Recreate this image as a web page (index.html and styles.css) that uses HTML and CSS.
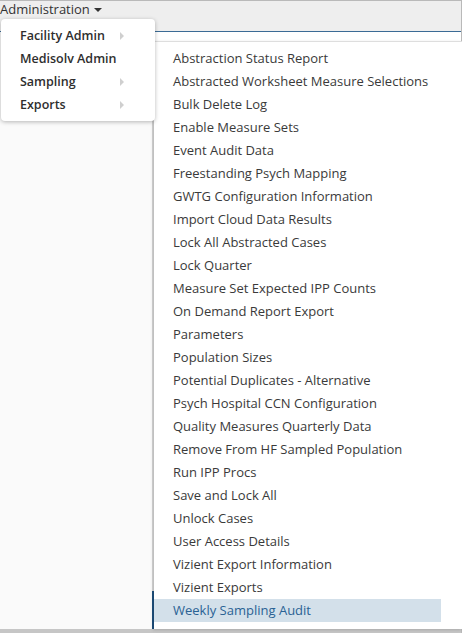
FILE: index.html
```html
<!DOCTYPE html>
<html>
<head>
<meta charset="utf-8">
<link rel="stylesheet" href="styles.css">
</head>
<body>
<div class="frame">
  <div class="navbar">
    <span class="nav-toggle">Administration<span class="caret"></span></span>
  </div>
  <div class="content">
    <div class="sidebar"></div>
    <div class="main">
      <div class="spacer"></div>
      <div class="selected-box"></div>
    </div>
  </div>
  <div class="bottom-bar"></div>

  <ul class="menu menu-main">
    <li class="has-sub">Facility Admin</li>
    <li>Medisolv Admin</li>
    <li class="has-sub">Sampling</li>
    <li class="has-sub">Exports</li>
  </ul>

  <ul class="menu menu-sub">
    <li>Abstraction Status Report</li>
    <li>Abstracted Worksheet Measure Selections</li>
    <li>Bulk Delete Log</li>
    <li>Enable Measure Sets</li>
    <li>Event Audit Data</li>
    <li>Freestanding Psych Mapping</li>
    <li>GWTG Configuration Information</li>
    <li>Import Cloud Data Results</li>
    <li>Lock All Abstracted Cases</li>
    <li>Lock Quarter</li>
    <li>Measure Set Expected IPP Counts</li>
    <li>On Demand Report Export</li>
    <li>Parameters</li>
    <li>Population Sizes</li>
    <li>Potential Duplicates - Alternative</li>
    <li>Psych Hospital CCN Configuration</li>
    <li>Quality Measures Quarterly Data</li>
    <li>Remove From HF Sampled Population</li>
    <li>Run IPP Procs</li>
    <li>Save and Lock All</li>
    <li>Unlock Cases</li>
    <li>User Access Details</li>
    <li>Vizient Export Information</li>
    <li>Vizient Exports</li>
    <li class="active">Weekly Sampling Audit</li>
  </ul>
</div>
</body>
</html>
```

FILE: styles.css
```css
* { box-sizing: border-box; }
html, body {
  margin: 0;
  padding: 0;
  width: 462px;
  height: 633px;
  overflow: hidden;
  background: #ffffff;
  font-family: "Open Sans", "Noto Sans", sans-serif;
}
.frame {
  position: relative;
  width: 462px;
  height: 633px;
  display: flex;
  flex-direction: column;
  border-top: 1px solid #b9b9b9;
  border-right: 1px solid #b9b9b9;
}
.navbar {
  height: 31px;
  flex: none;
  display: flex;
  align-items: flex-start;
  background: #eeeeee;
  border-bottom: 1px solid #3b6b95;
}
.nav-toggle {
  display: flex;
  align-items: center;
  font-size: 13px;
  line-height: 16px;
  color: #333333;
}
.caret {
  display: inline-block;
  margin-left: 4px;
  margin-top: 1px;
  border-top: 4px solid #333333;
  border-left: 4px solid transparent;
  border-right: 4px solid transparent;
}
.content {
  flex: 1;
  display: flex;
  min-height: 0;
}
.sidebar {
  width: 154px;
  flex: none;
  background: #fafafa;
  border-right: 2px solid #d4d4d4;
}
.main {
  flex: 1;
  display: flex;
  flex-direction: column;
  background: #ffffff;
}
.spacer { flex: 1; }
.selected-box {
  height: 38px;
  margin-left: -2px;
  border-left: 2px solid #1d4f7c;
  border-bottom: 2px solid #1d4f7c;
}
.bottom-bar {
  height: 4px;
  flex: none;
  background: #c6c6c6;
}
.menu {
  list-style: none;
  margin: 0;
  position: absolute;
  background: #ffffff;
}
.menu li {
  height: 23px;
  line-height: 23px;
  white-space: nowrap;
}
.menu-main {
  left: 1px;
  top: 18px;
  width: 154px;
  padding: 5px 0 5px 0;
  border-radius: 4px;
  box-shadow: 0 1px 4px rgba(0, 0, 0, 0.28);
  z-index: 2;
}
.menu-main li {
  position: relative;
  padding-left: 19px;
  font-size: 12.5px;
  font-weight: 600;
  color: #2e2e2e;
}
.menu-main li.has-sub::after {
  content: "";
  position: absolute;
  left: 119px;
  top: 8px;
  border-left: 4px solid #cfcfcf;
  border-top: 4px solid transparent;
  border-bottom: 4px solid transparent;
}
.menu-sub {
  left: 154px;
  top: 40px;
  width: 308px;
  height: 588px;
  padding: 5px 21px 0 0;
  border-top: 1px solid #dedede;
  box-shadow: -1px 1px 3px rgba(0, 0, 0, 0.15);
  z-index: 1;
}
.menu-sub li {
  padding-left: 19px;
  font-size: 13px;
  color: #3a3a3a;
}
.menu-sub li.active {
  background: #d3e0ea;
  color: #2a6294;
}
```
